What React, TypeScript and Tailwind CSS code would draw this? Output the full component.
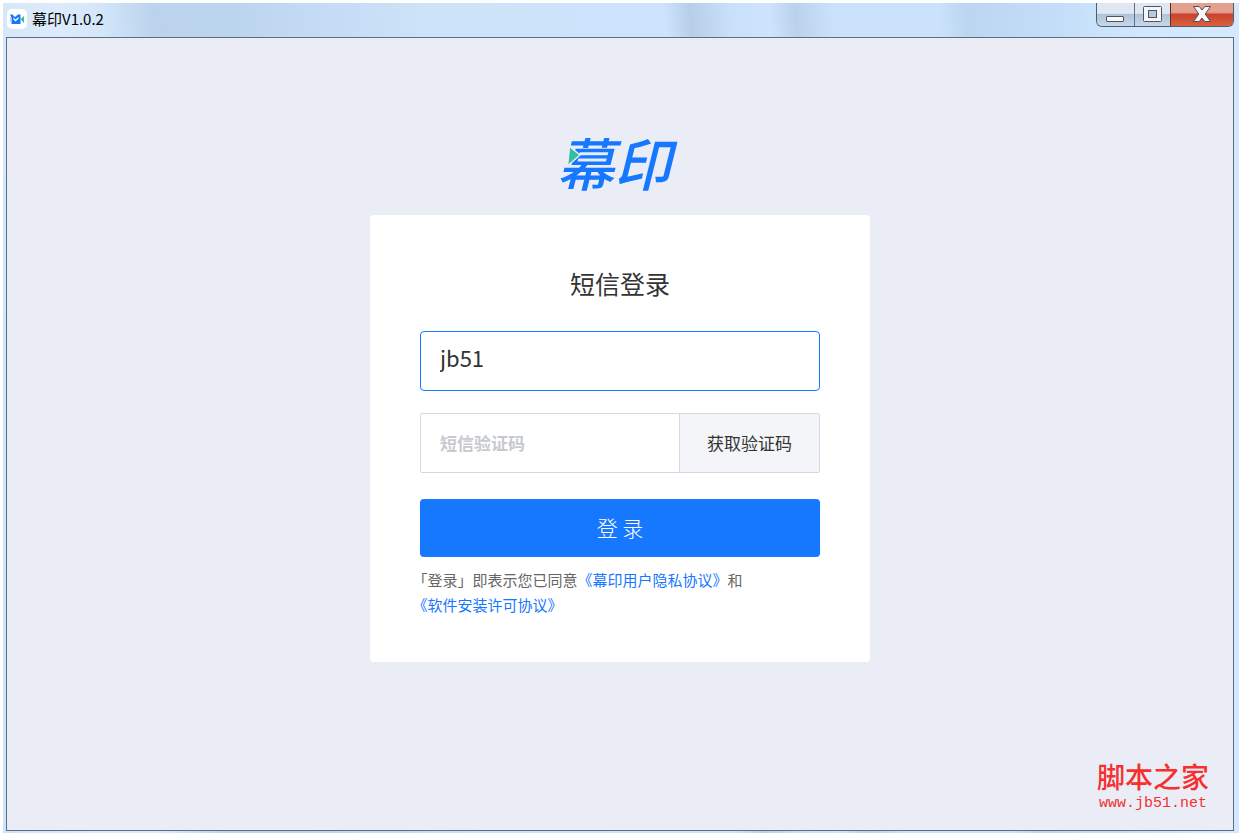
import { useState } from "react";
import clsx from "clsx";

const AppIcon = () => (
    <svg viewBox="0 0 20 20" className="h-5 w-5" aria-hidden="true">
        <rect width="20" height="20" rx="5" fill="#fff" />
        <path d="M3 5.500h2.500l2.500 2.500 3-2.500h2.500v9.500H5V10z" fill="#1677ff" />
        <path d="M6.500 8.500l2 2 3-2.500v1.800l-3 2.600-2-2z" fill="#fff" />
        <path d="M3 8.500h2V15H4z" fill="#8fbcfb" />
        <path d="M13.500 10.200l3.500-3.200v7z" fill="#2dc48d" />
    </svg>
);

const MinimizeIcon = () => (
    <svg viewBox="0 0 20 16" className="h-4 w-5" aria-hidden="true">
        <rect x="0.500" y="10.500" width="17" height="5" rx="0.500" fill="#f8f8f8" stroke="#4c5568" />
    </svg>
);

const MaximizeIcon = () => (
    <svg viewBox="0 0 20 16" className="h-4 w-5" aria-hidden="true">
        <rect x="0.500" y="0.500" width="18" height="15" rx="1" fill="#f6f6f6" stroke="#4c5568" />
        <rect x="5.500" y="4.500" width="8" height="7" fill="#b9cadd" stroke="#4c5568" />
    </svg>
);

const CloseIcon = () => (
    <svg viewBox="0 0 20 16" className="h-4 w-5" aria-hidden="true">
        <path
            d="M1.500 0.500h5.700L10 4l2.800-3.500h5.700L13.200 8l5.300 7.500h-5.700L10 12l-2.800 3.500H1.500L6.800 8z"
            fill="#f8f8f8"
            stroke="#574a5c"
            strokeLinejoin="round"
        />
    </svg>
);

const windowButtons = [
    { label: "最小化", icon: <MinimizeIcon />, className: "w-[37px] bg-linear-to-b from-[#dfe8f2] from-45% via-[#b0c2d6] via-50% to-[#c6d8ea]" },
    { label: "最大化", icon: <MaximizeIcon />, className: "w-9 border-l border-[#5f7186] bg-linear-to-b from-[#dfe8f2] from-45% via-[#b0c2d6] via-50% to-[#c6d8ea]" },
    { label: "关闭", icon: <CloseIcon />, className: "w-[63px] border-l border-[#5f2a2a] bg-linear-to-b from-[#e3a08f] from-40% via-[#c8432c] via-50% to-[#d9603f]" },
];

const TitleBar = () => (
    <header className="flex h-[34px] justify-between">
        <div className="flex h-8 items-center gap-[5px] pl-px">
            <AppIcon />
            <h1 className="text-[15px] leading-5 text-black">幕印V1.0.2</h1>
        </div>
        <div className="flex h-6 overflow-hidden rounded-b-md border border-t-0 border-[#4f5d70]">
            {windowButtons.map((button) => (
                <button
                    key={button.label}
                    type="button"
                    aria-label={button.label}
                    className={clsx("flex justify-center pt-[3px]", button.className)}
                >
                    {button.icon}
                </button>
            ))}
        </div>
    </header>
);

const Logo = () => (
    <div className="relative pr-3 text-[57px] leading-[60px] font-medium text-[#1677ff] italic">
        幕印
        <svg viewBox="0 0 14 22" className="absolute top-3.5 left-2.5 h-[22px] w-3.5" aria-hidden="true">
            <path d="M2.500 1.500l10.500 8.500L0.500 21z" fill="#33bfa0" stroke="#eaedf5" strokeWidth="1.500" />
        </svg>
    </div>
);

const LoginForm = () => {
    const [account, setAccount] = useState<string>("jb51");
    const [code, setCode] = useState<string>("");

    return (
        <form
            className="w-full max-w-[500px] rounded bg-white px-[50px] pt-[50px] pb-[45px]"
            onSubmit={(e) => e.preventDefault()}
        >
            <h2 className="text-center text-[25px] leading-9 text-[#333333]">短信登录</h2>
            <input
                type="text"
                aria-label="手机号"
                className="mt-[30px] h-[60px] w-full rounded border border-[#1677ff] px-[19px] pb-2 text-[22px] text-[#333333] outline-none"
                value={account}
                onChange={(e) => setAccount(e.target.value)}
            />
            <div className="mt-[22px] flex h-[60px] overflow-hidden rounded-xs border border-[#d5d8dd]">
                <input
                    type="text"
                    aria-label="短信验证码"
                    placeholder="短信验证码"
                    className="min-w-0 flex-1 px-[19px] text-[17px] text-[#333333] outline-none placeholder:font-bold placeholder:text-[#c6c9cf]"
                    value={code}
                    onChange={(e) => setCode(e.target.value)}
                />
                <button type="button" className="w-[140px] border-l border-[#d5d8dd] bg-[#f4f5f8] text-[17px] text-[#333333]">
                    获取验证码
                </button>
            </div>
            <button type="submit" className="mt-[26px] h-[58px] w-full rounded bg-[#1677ff] text-[21px] font-light text-white">
                登 录
            </button>
            <p className="mt-2.5 text-[15px] leading-[25px] text-[#666666] [text-spacing-trim:trim-start]">
                「登录」即表示您已同意<a href="#privacy" className="text-[#1677ff]">《幕印用户隐私协议》</a>和
                <br />
                <a href="#license" className="text-[#1677ff]">《软件安装许可协议》</a>
            </p>
        </form>
    );
};

const Watermark = () => (
    <div className="absolute right-6 bottom-[18px] text-center text-[#f5302f]">
        <p className="text-[28px] leading-10 font-medium">脚本之家</p>
        <p className="font-['Liberation_Mono',monospace] text-[15px] leading-4">www.jb51.net</p>
    </div>
);

const App = () => (
    <div className="flex min-h-screen flex-col bg-white p-[3px] font-['Noto_Sans_CJK_SC',sans-serif]">
        <div className="flex flex-1 flex-col bg-[linear-gradient(85deg,#cfe3f8_0%,#dcebfb_10%,#d3e6fa_13%,#bbd3ec_17%,#bcd5ee_23%,#cde3fa_38%,#cde4fc_56%,#b6cee8_58%,#c8e0f9_61%,#cde4fc_64%,#bad2ec_66%,#cbe2fb_69%,#cbe2fb_77%,#bcd6f1_79%,#c4def9_86%,#d3e8fe_93%,#d6e8fb_100%)] pr-[5px] pb-0.5 pl-[3px]">
            <TitleBar />
            <main className="relative flex flex-1 flex-col items-center gap-6 border border-[#5b6e84] bg-[#eaedf5] px-4 pt-[93px] pb-16">
                <Logo />
                <LoginForm />
                <Watermark />
            </main>
        </div>
    </div>
);

export default App;
